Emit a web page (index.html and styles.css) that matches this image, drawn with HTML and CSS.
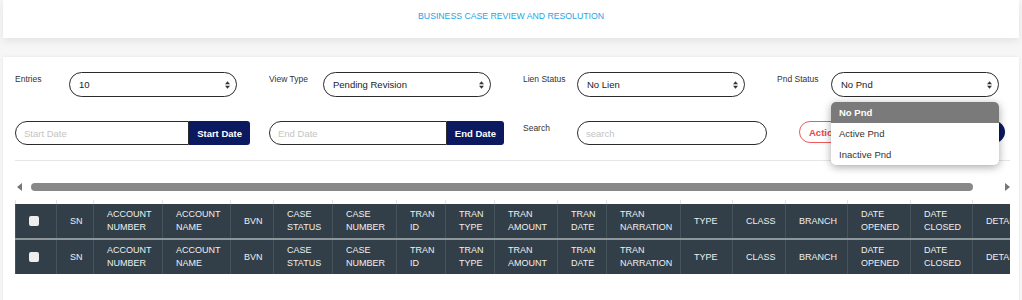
FILE: index.html
```html
<!DOCTYPE html>
<html lang="en">
  <head>
    <meta charset="UTF-8" />
    <title>Business Case Review and Resolution</title>
    <link rel="stylesheet" href="styles.css">
  </head>
  <body>
    <header class="topbar">
      <h1>Business Case Review and Resolution</h1>
    </header>

    <main class="card">
      <!-- Filters, first row -->
      <div class="filters">
        <div class="field">
          <label>Entries</label>
          <div class="select">
            <span>10</span>
            <svg class="caret" viewBox="0 0 6 9"><path d="M3 0L6 3.6H0Z M0 5.4H6L3 9Z" /></svg>
          </div>
        </div>
        <div class="field">
          <label>View Type</label>
          <div class="select">
            <span>Pending Revision</span>
            <svg class="caret" viewBox="0 0 6 9"><path d="M3 0L6 3.6H0Z M0 5.4H6L3 9Z" /></svg>
          </div>
        </div>
        <div class="field">
          <label>Lien Status</label>
          <div class="select">
            <span>No Lien</span>
            <svg class="caret" viewBox="0 0 6 9"><path d="M3 0L6 3.6H0Z M0 5.4H6L3 9Z" /></svg>
          </div>
        </div>
        <div class="field">
          <label>Pnd Status</label>
          <div class="select">
            <span>No Pnd</span>
            <svg class="caret" viewBox="0 0 6 9"><path d="M3 0L6 3.6H0Z M0 5.4H6L3 9Z" /></svg>
          </div>
          <!-- open list -->
          <ul class="options">
            <li class="selected">No Pnd</li>
            <li>Active Pnd</li>
            <li>Inactive Pnd</li>
          </ul>
        </div>
      </div>

      <!-- Filters, second row -->
      <div class="filters-row">
        <div class="date-group">
          <input type="text" placeholder="Start Date" />
          <button>Start Date</button>
        </div>
        <div class="date-group">
          <input type="text" placeholder="End Date" />
          <button>End Date</button>
        </div>
        <div class="field search">
          <label>Search</label>
          <input type="text" placeholder="search" />
        </div>
        <div class="actions">
          <button class="btn-action">Action</button>
          <button class="btn-go">Submit</button>
        </div>
      </div>

      <hr class="divider" />

      <!-- top scrollbar -->
      <div class="hscroll">
        <svg class="arrow" viewBox="0 0 5 8"><path d="M5 0V8L0 4Z" /></svg>
        <div class="track"><div class="thumb"></div></div>
        <svg class="arrow" viewBox="0 0 5 8"><path d="M0 0V8L5 4Z" /></svg>
      </div>

      <div class="table-wrap">
        <table>
          <colgroup>
            <col class="c-check"><col class="c-sn"><col class="c-accno"><col class="c-accname">
            <col class="c-bvn"><col class="c-status"><col class="c-caseno"><col class="c-tranid">
            <col class="c-trantype"><col class="c-amount"><col class="c-trandate"><col class="c-narration">
            <col class="c-type"><col class="c-class"><col class="c-branch"><col class="c-opened">
            <col class="c-closed"><col class="c-details">
          </colgroup>
          <thead>
            <tr class="gap">
              <td></td><td></td><td></td><td></td><td></td><td></td><td></td><td></td><td></td>
              <td></td><td></td><td></td><td></td><td></td><td></td><td></td><td></td><td></td>
            </tr>
            <tr>
              <th><span class="check"></span></th>
              <th>SN</th><th>Account Number</th><th>Account Name</th><th>BVN</th>
              <th>Case Status</th><th>Case Number</th><th>Tran ID</th><th>Tran Type</th>
              <th>Tran Amount</th><th>Tran Date</th><th>Tran Narration</th><th>Type</th>
              <th>Class</th><th>Branch</th><th>Date Opened</th><th>Date Closed</th><th>Details</th>
            </tr>
            <tr>
              <th><span class="check"></span></th>
              <th>SN</th><th>Account Number</th><th>Account Name</th><th>BVN</th>
              <th>Case Status</th><th>Case Number</th><th>Tran ID</th><th>Tran Type</th>
              <th>Tran Amount</th><th>Tran Date</th><th>Tran Narration</th><th>Type</th>
              <th>Class</th><th>Branch</th><th>Date Opened</th><th>Date Closed</th><th>Details</th>
            </tr>
          </thead>
        </table>
      </div>
    </main>
  </body>
</html>
```

FILE: styles.css
```css
* {
  box-sizing: border-box;
}

body {
  margin: 0;
  background: #f6f6f6;
  font-family: "Liberation Sans", Arial, sans-serif;
  color: #333;
}

.topbar {
  margin: 0 3px;
  height: 38px;
  padding-top: 11px;
  background: #fff;
  text-align: center;
  box-shadow: 0 3px 8px rgba(0, 0, 0, 0.08);
}

.topbar h1 {
  margin: 0;
  font-size: 8.7px;
  line-height: 10px;
  font-weight: normal;
  text-transform: uppercase;
  color: #22a6e6;
}

.card {
  margin: 19px 3px 0;
  min-height: 243px;
  padding: 15px 9px 40px 12px;
  background: #fff;
  box-shadow: 0 0 3px rgba(0, 0, 0, 0.08);
}

/* filters */
.filters {
  display: grid;
  grid-template-columns: repeat(4, 222px);
  column-gap: 32px;
}

.field {
  position: relative;
  display: flex;
  align-items: flex-start;
}

.field label {
  flex: none;
  width: 54px;
  margin-top: 2px;
  font-size: 8.5px;
  line-height: 10px;
  color: #333;
}

.select {
  flex: 1;
  height: 25px;
  display: flex;
  align-items: center;
  justify-content: space-between;
  padding: 0 6px 0 9px;
  border: 1.5px solid #2b2b2b;
  border-radius: 13px;
  font-size: 9.5px;
  color: #222;
}

.caret {
  width: 5px;
  height: 8px;
  fill: #333;
}

.options {
  position: absolute;
  top: 30px;
  left: 54px;
  right: 0;
  z-index: 5;
  margin: 0;
  padding: 0;
  list-style: none;
  background: #fff;
  border-radius: 5px;
  overflow: hidden;
  box-shadow: 0 2px 8px rgba(0, 0, 0, 0.35);
}

.options li {
  height: 21px;
  line-height: 21px;
  padding-left: 8px;
  font-size: 9.5px;
  color: #333;
}

.options li.selected {
  background: #7a7a7a;
  color: #fff;
  font-weight: bold;
}

.filters-row {
  display: flex;
  align-items: flex-start;
  margin-top: 24px;
}

.date-group {
  display: flex;
  width: 235px;
  height: 24px;
  margin-right: 19px;
}

.date-group input,
.search input {
  flex: 1;
  min-width: 0;
  height: 24px;
  padding: 0 8px;
  border: 1.5px solid #2b2b2b;
  font-family: inherit;
  font-size: 9.5px;
  outline: none;
}

.date-group input {
  border-radius: 12px 0 0 12px;
}

.search input {
  border-radius: 12px;
}

input::placeholder {
  color: #c4c4c4;
}

.date-group button {
  height: 24px;
  padding: 0 8px;
  border: none;
  border-radius: 0 3px 3px 0;
  background: #0b1a60;
  color: #fff;
  font-family: inherit;
  font-size: 9.5px;
  font-weight: bold;
}

.search {
  width: 244px;
  margin-right: 32px;
}

.actions {
  display: flex;
  gap: 8px;
}

.actions button {
  height: 22px;
  border-radius: 11px;
  font-family: inherit;
  font-size: 9.5px;
  font-weight: bold;
}

.btn-action {
  padding: 0 9px;
  border: 1px solid #f05a5a;
  background: #fff;
  color: #e84545;
}

.btn-go {
  width: 148px;
  border: none;
  background: #0b1a60;
  color: #fff;
}

.divider {
  margin: 15px 0 0;
  border: 0;
  border-top: 1px solid #e6e6e6;
}

/* scrollbar above the table */
.hscroll {
  display: flex;
  align-items: center;
  height: 8px;
  margin-top: 22px;
  padding-left: 2px;
}

.arrow {
  flex: none;
  width: 5px;
  height: 8px;
  fill: #777;
}

.track {
  flex: 1;
  margin: 0 3px 0 9px;
}

.thumb {
  width: 97%;
  height: 8px;
  border-radius: 4px;
  background: #888;
}

/* table */
.table-wrap {
  margin-top: 9px;
  overflow: hidden;
}

table {
  width: 1035px;
  table-layout: fixed;
  border-collapse: collapse;
}

.gap td {
  height: 4px;
  padding: 0;
  border-left: 1px solid #e2e2e2;
}

th {
  height: 35px;
  padding: 0 4px 0 13px;
  background: #323f48;
  border-left: 1px solid #46535b;
  color: #f0f0f0;
  font-size: 9px;
  line-height: 13px;
  font-weight: normal;
  text-align: left;
  text-transform: uppercase;
  white-space: normal;
}

thead tr:nth-child(2) th {
  border-bottom: 2px solid #8d969b;
}

.check {
  display: block;
  width: 10px;
  height: 10px;
  border-radius: 2px;
  background: #eee;
}

.c-check { width: 41px; }
.c-sn { width: 37px; }
.c-accno { width: 69px; }
.c-accname { width: 68px; }
.c-bvn { width: 43px; }
.c-status { width: 59px; }
.c-caseno { width: 64px; }
.c-tranid { width: 49px; }
.c-trantype { width: 49px; }
.c-amount { width: 63px; }
.c-trandate { width: 49px; }
.c-narration { width: 74px; }
.c-type { width: 52px; }
.c-class { width: 53px; }
.c-branch { width: 62px; }
.c-opened { width: 63px; }
.c-closed { width: 62px; }
.c-details { width: 78px; }
```
